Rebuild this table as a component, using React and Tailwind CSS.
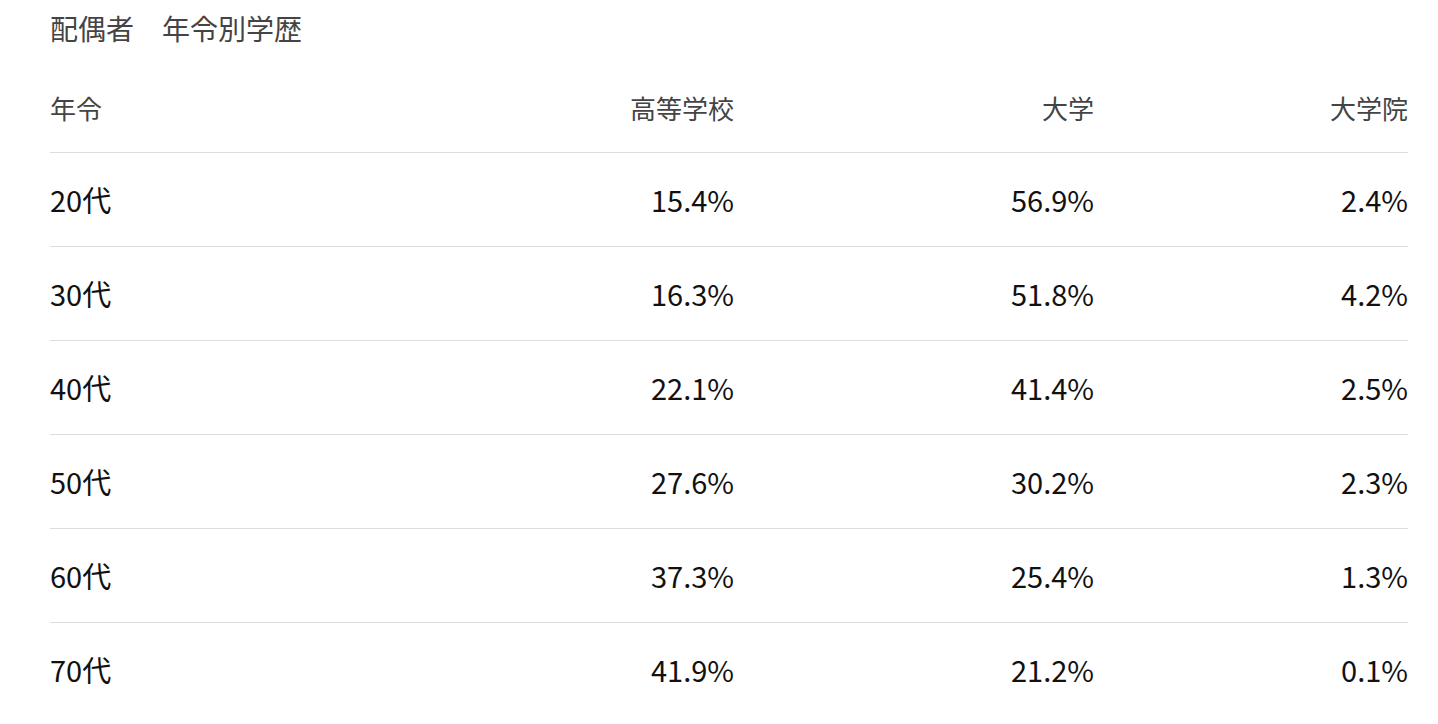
import React from "react";

const rows = [
  ["20代", "15.4%", "56.9%", "2.4%"],
  ["30代", "16.3%", "51.8%", "4.2%"],
  ["40代", "22.1%", "41.4%", "2.5%"],
  ["50代", "27.6%", "30.2%", "2.3%"],
  ["60代", "37.3%", "25.4%", "1.3%"],
  ["70代", "41.9%", "21.2%", "0.1%"],
];

export default function App() {
  return (
    <div
      className="min-h-screen bg-white pl-[50px] pr-[30px]"
      style={{ fontFamily: '"Noto Sans CJK JP", "Noto Sans", sans-serif' }}
    >
      <h1 className="pt-[12px] h-[64px] text-[28px] leading-[32px] text-[#444] font-normal">
        配偶者　年令別学歴
      </h1>
      <div className="grid grid-cols-[324px_360px_360px_314px] h-[89px] items-center border-b border-[#dddddd] text-[26px] text-[#444] pb-[2px]">
        <div>年令</div>
        <div className="text-right">高等学校</div>
        <div className="text-right">大学</div>
        <div className="text-right">大学院</div>
      </div>
      {rows.map((r, i) => (
        <div
          key={i}
          className={`grid grid-cols-[324px_360px_360px_314px] h-[94px] items-center text-[29px] text-[#111] ${
            i < rows.length - 1 ? "border-b border-[#dddddd]" : ""
          }`}
        >
          <div>{r[0]}</div>
          <div className="text-right">{r[1]}</div>
          <div className="text-right">{r[2]}</div>
          <div className="text-right">{r[3]}</div>
        </div>
      ))}
    </div>
  );
}
